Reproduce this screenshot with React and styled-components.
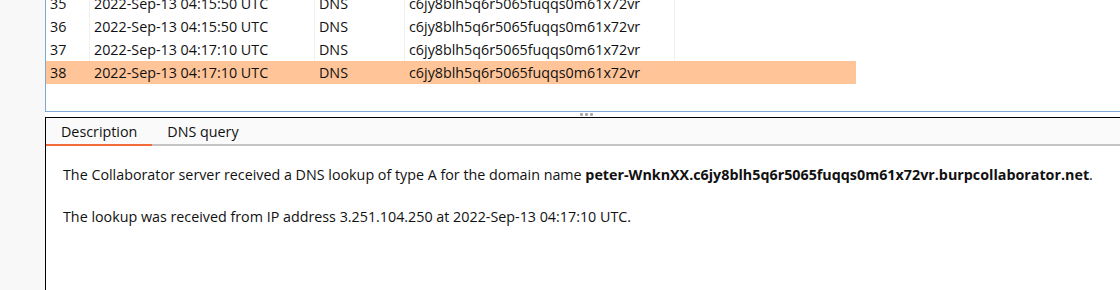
import styled, { createGlobalStyle } from "styled-components"

const GlobalStyle = createGlobalStyle`
  html, body {
    margin: 0;
    padding: 0;
    background: #f8f8f8;
  }
  body {
    font-family: "Open Sans", "Noto Sans", "Liberation Sans", sans-serif;
    font-size: 14px;
    color: #111;
  }
`

const payload = "c6jy8blh5q6r5065fuqqs0m61x72vr"

// the list is scrolled: row 35 is half hidden at the top
const rows = [
  { id: 35, time: "2022-Sep-13 04:15:50 UTC", type: "DNS" },
  { id: 36, time: "2022-Sep-13 04:15:50 UTC", type: "DNS" },
  { id: 37, time: "2022-Sep-13 04:17:10 UTC", type: "DNS" },
  { id: 38, time: "2022-Sep-13 04:17:10 UTC", type: "DNS", selected: true },
]

export default function App() {
  return (
    <>
      <GlobalStyle />
      <Page>
        <Gutter />
        <Main>
          <TablePane>
            <Rows>
              {rows.map((r) => (
                <Row key={r.id} selected={r.selected}>
                  <Cell w={44}>{r.id}</Cell>
                  <Cell w={225}>{r.time}</Cell>
                  <Cell w={90}>{r.type}</Cell>
                  <Cell w={270}>{payload}</Cell>
                  <Cell w={181} />
                </Row>
              ))}
            </Rows>
          </TablePane>

          <Splitter>
            <Dot /><Dot /><Dot />
          </Splitter>

          <DetailPanel>
            <TabBar>
              <Tab active>Description</Tab>
              <Tab>DNS query</Tab>
            </TabBar>
            <Content>
              <p>
                The Collaborator server received a DNS lookup of type A for the domain name{" "}
                <b>peter-WnknXX.{payload}.burpcollaborator.net</b>.
              </p>
              <p>The lookup was received from IP address 3.251.104.250 at 2022-Sep-13 04:17:10 UTC.</p>
            </Content>
          </DetailPanel>
        </Main>
      </Page>
    </>
  )
}

const Page = styled.div`
  display: flex;
  height: 290px;
  overflow: hidden;
`
const Gutter = styled.div`
  width: 45px;
  flex-shrink: 0;
  background: #f8f8f8;
`
const Main = styled.div`
  flex: 1;
  display: flex;
  flex-direction: column;
  min-width: 0;
`
const TablePane = styled.div`
  height: 111px;
  flex-shrink: 0;
  background: #fff;
  border-left: 1px solid #7ea9d3;
  border-bottom: 1px solid #7ea9d3;
  overflow: hidden;
`
const Rows = styled.div`
  margin-top: -8px;
  width: 810px;
`
const Row = styled.div`
  display: flex;
  height: 23px;
  align-items: stretch;
  background: ${(p) => (p.selected ? "#ffc599" : "#fff")};
  & > div {
    border-right: 1px solid ${(p) => (p.selected ? "#ffc599" : "#f0f0f0")};
  }
  & > div:last-child {
    border-right: none;
  }
`
const Cell = styled.div`
  width: ${(p) => p.w}px;
  box-sizing: border-box;
  padding-left: 4px;
  display: flex;
  align-items: center;
  white-space: nowrap;
  font-size: 14.3px;
`
const Splitter = styled.div`
  height: 5px;
  flex-shrink: 0;
  display: flex;
  justify-content: center;
  align-items: center;
  gap: 2px;
  padding-left: 8px;
  background: #fff;
`
const Dot = styled.span`
  width: 3px;
  height: 3px;
  background: #a8a8a8;
  border-radius: 1px;
`
const DetailPanel = styled.div`
  flex: 1;
  display: flex;
  flex-direction: column;
  border-top: 1px solid #000;
  border-left: 1px solid #000;
  background: #fff;
`
const TabBar = styled.div`
  display: flex;
  height: 26px;
  background: #fafafa;
  border-bottom: 2px solid #c4c4c4;
`
const Tab = styled.div`
  padding: 0 15px;
  display: flex;
  align-items: center;
  font-size: 14.3px;
  color: #111;
  margin-bottom: -2px;
  border-bottom: 2px solid ${(p) => (p.active ? "#f26a3a" : "transparent")};
`
const Content = styled.div`
  padding: 19px 16px 0 17px;
  font-size: 14.3px;
  p {
    margin: 0 0 22px 0;
    line-height: 20px;
    white-space: nowrap;
  }
  b {
    font-weight: 700;
  }
`
